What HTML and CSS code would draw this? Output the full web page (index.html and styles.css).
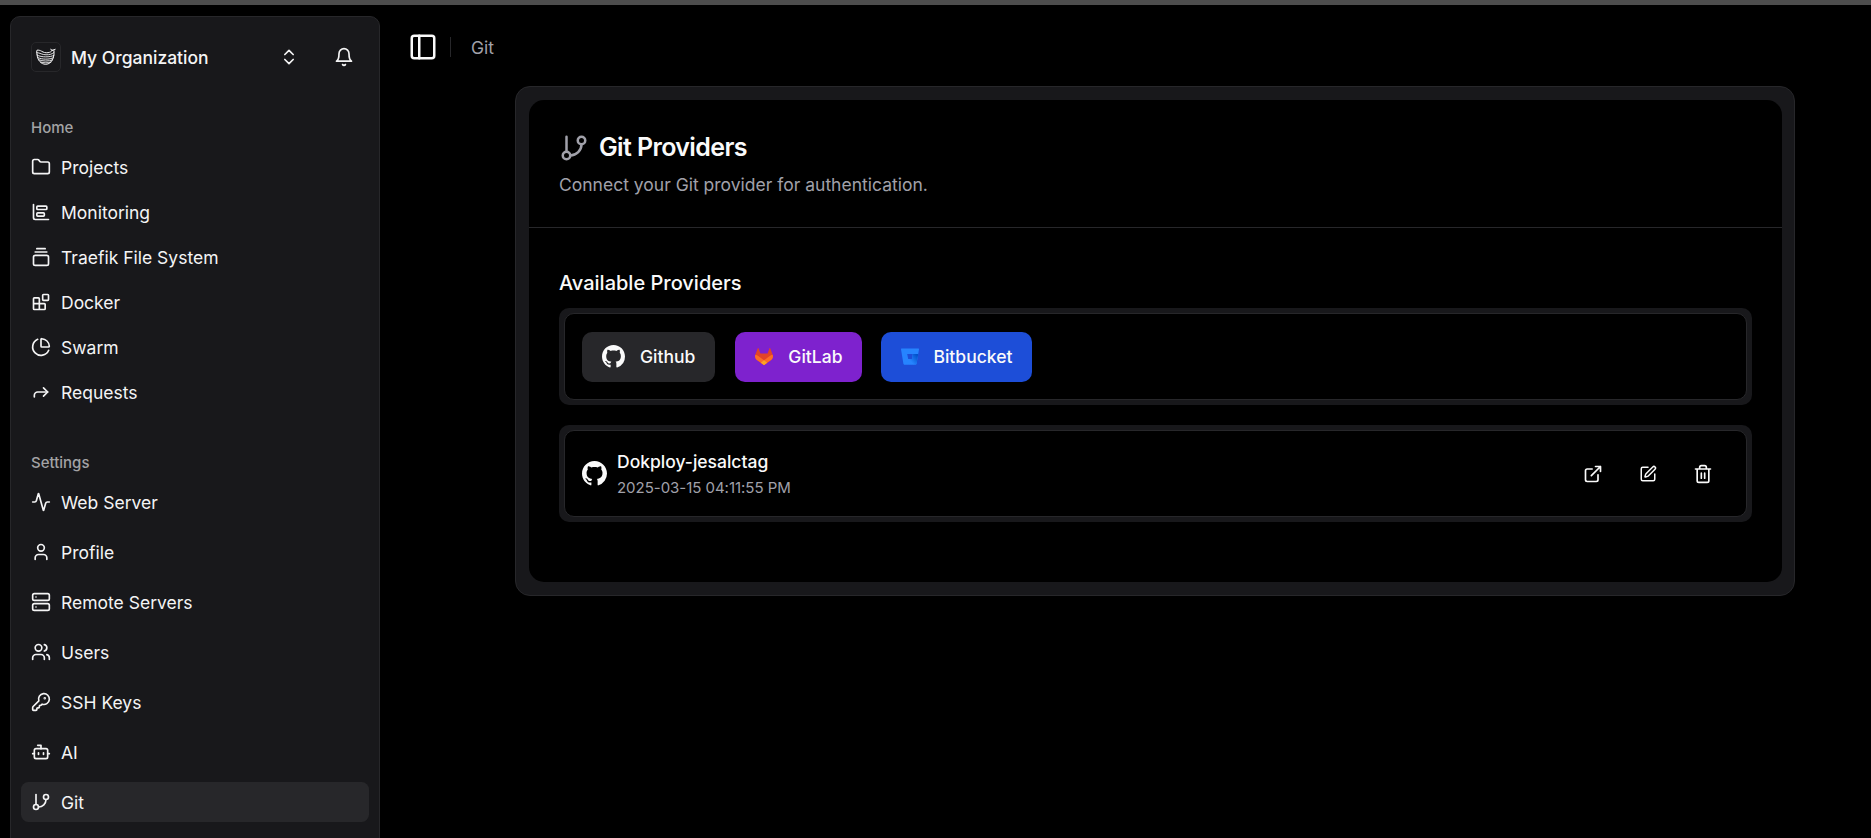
FILE: index.html
```html
<!DOCTYPE html>
<html lang="en">
<head>
<meta charset="utf-8">
<title>Git</title>
<link rel="stylesheet" href="styles.css">
</head>
<body>
<div class="topline"></div>
<div class="shell">
  <aside class="sidebar">
    <div class="org">
      <div class="org-logo">
        <svg viewBox="0 0 20 18" width="20" height="18" fill="none" stroke="currentColor" stroke-width="1" stroke-linecap="round">
          <path d="M1 6.200C.6 4.500.6 3.200 1 2.200c1.500-.3 3 .2 4.500 1C7.500 4.400 9.500 5 12 4.700c2-.3 3.600-1 4.300-2.500M16.300 2.300 14.700 1.300M16.300 2.300 19.200 1.300M17.900 2.300C18.900 8.500 16 16.300 9.800 16.300 4.800 16.300 1.300 12 1 6.200"/>
          <path d="M1 4.600c3 .2 5 2.200 9 2.200 3.500 0 6.300-.6 8-2.400M1.300 7.300c4.500 2 12.400 2.300 16.700 0M1.800 9.600c4 2 11.800 2.200 15.700 0M2.900 11.800c3.600 1.600 9.900 1.800 13.700 0M4.600 14c3 1.100 7.500 1.200 10.500 0" stroke-width=".9"/>
        </svg>
      </div>
      <span class="org-name">My Organization</span>
      <svg class="icon chevrons" viewBox="0 0 24 24"><path d="m7 15 5 5 5-5M7 9l5-5 5 5"/></svg>
      <svg class="icon bell" viewBox="0 0 24 24"><path d="M6 8a6 6 0 0 1 12 0c0 7 3 9 3 9H3s3-2 3-9M10.300 21a1.940 1.940 0 0 0 3.400 0"/></svg>
    </div>

    <nav class="group">
      <div class="group-label">Home</div>
      <a class="item"><svg class="icon" viewBox="0 0 24 24"><path d="M20 20a2 2 0 0 0 2-2V8a2 2 0 0 0-2-2h-7.900a2 2 0 0 1-1.690-.9L9.600 3.900A2 2 0 0 0 7.930 3H4a2 2 0 0 0-2 2v13a2 2 0 0 0 2 2Z"/></svg>Projects</a>
      <a class="item"><svg class="icon" viewBox="0 0 24 24"><path d="M3 3v16a2 2 0 0 0 2 2h16"/><rect x="7" y="5" width="12" height="4" rx="1"/><rect x="7" y="13" width="9" height="4" rx="1"/></svg>Monitoring</a>
      <a class="item"><svg class="icon" viewBox="0 0 24 24"><path d="M7 2h10M5 6h14"/><rect width="18" height="12" x="3" y="10" rx="2"/></svg>Traefik File System</a>
      <a class="item"><svg class="icon" viewBox="0 0 24 24"><rect width="7" height="7" x="14" y="3" rx="1"/><path d="M10 21V8a1 1 0 0 0-1-1H4a1 1 0 0 0-1 1v12a1 1 0 0 0 1 1h12a1 1 0 0 0 1-1v-5a1 1 0 0 0-1-1H3"/></svg>Docker</a>
      <a class="item"><svg class="icon" viewBox="0 0 24 24"><path d="M21 12c.552 0 1.005-.449.950-.998a10 10 0 0 0-8.953-8.951c-.550-.055-.998.398-.998.950v8a1 1 0 0 0 1 1z"/><path d="M21.210 15.890A10 10 0 1 1 8 2.830"/></svg>Swarm</a>
      <a class="item"><svg class="icon" viewBox="0 0 24 24"><path d="m15 17 5-5-5-5"/><path d="M4 18v-2a4 4 0 0 1 4-4h12"/></svg>Requests</a>
    </nav>

    <nav class="group settings">
      <div class="group-label">Settings</div>
      <a class="item"><svg class="icon" viewBox="0 0 24 24"><path d="M22 12h-2.480a2 2 0 0 0-1.930 1.460l-2.350 8.360a.25.25 0 0 1-.48 0L9.240 2.180a.25.25 0 0 0-.48 0l-2.350 8.360A2 2 0 0 1 4.490 12H2"/></svg>Web Server</a>
      <a class="item"><svg class="icon" viewBox="0 0 24 24"><path d="M19 21v-2a4 4 0 0 0-4-4H9a4 4 0 0 0-4 4v2"/><circle cx="12" cy="7" r="4"/></svg>Profile</a>
      <a class="item"><svg class="icon" viewBox="0 0 24 24"><rect width="20" height="8" x="2" y="2" rx="2"/><rect width="20" height="8" x="2" y="14" rx="2"/><path d="M6 6h.01M6 18h.01"/></svg>Remote Servers</a>
      <a class="item"><svg class="icon" viewBox="0 0 24 24"><path d="M16 21v-2a4 4 0 0 0-4-4H6a4 4 0 0 0-4 4v2"/><circle cx="9" cy="7" r="4"/><path d="M22 21v-2a4 4 0 0 0-3-3.870M16 3.130a4 4 0 0 1 0 7.750"/></svg>Users</a>
      <a class="item"><svg class="icon" viewBox="0 0 24 24"><path d="M2.586 17.414A2 2 0 0 0 2 18.828V21a1 1 0 0 0 1 1h3a1 1 0 0 0 1-1v-1a1 1 0 0 1 1-1h1a1 1 0 0 0 1-1v-1a1 1 0 0 1 1-1h.172a2 2 0 0 0 1.414-.586l.814-.814a6.500 6.500 0 1 0-4-4z"/><circle cx="16.500" cy="7.500" r=".5" fill="currentColor"/></svg>SSH Keys</a>
      <a class="item"><svg class="icon" viewBox="0 0 24 24"><path d="M12 8V4H8"/><rect width="16" height="12" x="4" y="8" rx="2"/><path d="M2 14h2M20 14h2M15 13v2M9 13v2"/></svg>AI</a>
      <a class="item active"><svg class="icon" viewBox="0 0 24 24"><path d="M6 3v12"/><circle cx="18" cy="6" r="3"/><circle cx="6" cy="18" r="3"/><path d="M18 9a9 9 0 0 1-9 9"/></svg>Git</a>
    </nav>
  </aside>

  <main class="main">
    <header class="crumbs">
      <svg class="icon panel" viewBox="0 0 24 24"><rect width="18" height="18" x="3" y="3" rx="2"/><path d="M9 3v18"/></svg>
      <span class="sep"></span>
      <span>Git</span>
    </header>

    <section class="frame">
      <div class="card">
        <div class="card-head">
          <h1 class="title"><svg class="icon title-icon" viewBox="0 0 24 24"><path d="M6 3v12"/><circle cx="18" cy="6" r="3"/><circle cx="6" cy="18" r="3"/><path d="M18 9a9 9 0 0 1-9 9"/></svg>Git Providers</h1>
          <p class="desc">Connect your Git provider for authentication.</p>
        </div>
        <div class="card-body">
          <h2 class="subtitle">Available Providers</h2>
          <div class="well">
            <div class="well-inner">
              <button class="btn github">
                <svg class="mark" viewBox="0 0 16 16" fill="currentColor"><path d="M8 0C3.580 0 0 3.580 0 8c0 3.540 2.290 6.530 5.470 7.590.4.070.55-.17.55-.38 0-.19-.01-.82-.01-1.490-2.010.37-2.530-.49-2.690-.94-.09-.23-.48-.94-.82-1.130-.28-.15-.68-.52-.01-.53.63-.01 1.080.58 1.230.82.72 1.210 1.870.87 2.330.66.070-.52.28-.87.51-1.070-1.780-.2-3.640-.89-3.640-3.950 0-.87.31-1.590.82-2.150-.08-.2-.36-1.020.08-2.120 0 0 .67-.21 2.200.82.64-.18 1.320-.27 2-.27s1.360.09 2 .27c1.530-1.040 2.200-.82 2.200-.82.44 1.100.16 1.920.08 2.120.51.56.82 1.270.82 2.150 0 3.070-1.870 3.750-3.650 3.950.29.25.54.73.54 1.480 0 1.070-.01 1.930-.01 2.200 0 .21.15.46.55.38A8.010 8.010 0 0 0 16 8c0-4.420-3.580-8-8-8z"/></svg>
                <span>Github</span>
              </button>
              <button class="btn gitlab">
                <svg class="mark" viewBox="0 0 18 17"><path fill="#e24329" d="M17.700 6.700 15.300.4c-.15-.4-.7-.4-.85 0L12.600 5.500H5.400L3.550.4C3.400 0 2.850 0 2.700.4L.3 6.700c-.7 2-.1 4 1.600 5.300L9 17l7.100-5c1.700-1.300 2.300-3.300 1.600-5.300z"/><path fill="#fc6d26" d="M17.700 6.700c-1.200.25-2.300.75-3.300 1.500L9 12.200 3.600 8.200C2.600 7.450 1.500 6.950.3 6.700c-.7 2-.1 4 1.600 5.300L9 17l7.100-5c1.700-1.300 2.300-3.300 1.600-5.300z"/><path fill="#fca326" d="m5.800 14.700 2.600 2c.4.300.8.300 1.200 0l2.600-2L9 12.200z"/></svg>
                <span>GitLab</span>
              </button>
              <button class="btn bitbucket">
                <svg class="mark" viewBox="0 0 18 16"><defs><linearGradient id="bb" x1="17" y1="5" x2="9" y2="12" gradientUnits="userSpaceOnUse"><stop offset=".18" stop-color="#0052cc"/><stop offset="1" stop-color="#2684ff"/></linearGradient></defs><path fill="#2684ff" d="M.6 0a.6.6 0 0 0-.6.7l2.400 14.600c.1.400.4.700.8.700h11.700c.3 0 .5-.2.600-.5L18 .7a.6.6 0 0 0-.6-.7zM10.900 10.600H7.200l-1-5.200h5.600z"/><path fill="url(#bb)" d="M17.200 5.400h-5.400l-.9 5.200H7.200L2.800 15.800c.1.100.3.200.5.200h11.600c.3 0 .5-.2.600-.5z"/></svg>
                <span>Bitbucket</span>
              </button>
            </div>
          </div>

          <div class="well">
            <div class="well-inner row">
              <svg class="avatar" viewBox="0 0 16 16" fill="currentColor"><path d="M8 0C3.580 0 0 3.580 0 8c0 3.540 2.290 6.530 5.470 7.590.4.070.55-.17.55-.38 0-.19-.01-.82-.01-1.490-2.010.37-2.530-.49-2.690-.94-.09-.23-.48-.94-.82-1.130-.28-.15-.68-.52-.01-.53.63-.01 1.080.58 1.230.82.72 1.210 1.870.87 2.330.66.070-.52.28-.87.51-1.070-1.780-.2-3.640-.89-3.640-3.950 0-.87.31-1.590.82-2.150-.08-.2-.36-1.020.08-2.120 0 0 .67-.21 2.200.82.64-.18 1.320-.27 2-.27s1.360.09 2 .27c1.530-1.040 2.200-.82 2.200-.82.44 1.100.16 1.920.08 2.120.51.56.82 1.270.82 2.150 0 3.070-1.870 3.750-3.650 3.950.29.25.54.73.54 1.480 0 1.070-.01 1.930-.01 2.200 0 .21.15.46.55.38A8.010 8.010 0 0 0 16 8c0-4.420-3.580-8-8-8z"/></svg>
              <div class="meta">
                <span class="name">Dokploy-jesalctag</span>
                <span class="date">2025-03-15 04:11:55 PM</span>
              </div>
              <div class="actions">
                <svg class="icon" viewBox="0 0 24 24"><path d="M15 3h6v6M10 14 21 3M18 13v6a2 2 0 0 1-2 2H5a2 2 0 0 1-2-2V8a2 2 0 0 1 2-2h6"/></svg>
                <svg class="icon edit" viewBox="0 0 24 24"><path d="M12 3H5a2 2 0 0 0-2 2v14a2 2 0 0 0 2 2h14a2 2 0 0 0 2-2v-7"/><path d="M18.375 2.625a1 1 0 0 1 3 3l-9.013 9.014a2 2 0 0 1-.853.505l-2.873.84a.5.5 0 0 1-.62-.62l.84-2.873a2 2 0 0 1 .506-.852z"/></svg>
                <svg class="icon" viewBox="0 0 24 24"><path d="M3 6h18M19 6v14c0 1-1 2-2 2H7c-1 0-2-1-2-2V6M8 6V4c0-1 1-2 2-2h4c1 0 2 1 2 2v2M10 11v6M14 11v6"/></svg>
              </div>
            </div>
          </div>
        </div>
      </div>
    </section>
  </main>
</div>
</body>
</html>
```
FILE: styles.css
```css
* { box-sizing: border-box; }

html, body {
  margin: 0;
  height: 100%;
  overflow: hidden;
}

body {
  background: #000;
  color: #fafafa;
  font: 400 17.5px/25px Inter, "Liberation Sans", sans-serif;
}

h1, h2, p { margin: 0; }

.topline {
  height: 5px;
  background: #4d4d4d;
}

.shell {
  display: flex;
  height: calc(100vh - 5px);
  overflow: hidden;
}

.icon {
  width: 20px;
  height: 20px;
  flex: none;
  fill: none;
  stroke: currentColor;
  stroke-width: 2;
  stroke-linecap: round;
  stroke-linejoin: round;
}

/* Sidebar */
.sidebar {
  width: 370px;
  height: 860px;
  flex: none;
  margin: 11px 0 0 10px;
  padding: 10px;
  background: #18181b;
  border: 1px solid #27272a;
  border-radius: 10px;
  color: #f4f4f5;
}

.org {
  display: flex;
  align-items: center;
  height: 60px;
  padding: 0 15px 0 10px;
}

.org-logo {
  display: grid;
  place-items: center;
  width: 30px;
  height: 30px;
  border: 1px solid #27272a;
  border-radius: 5px;
}

.org-name {
  flex: 1;
  margin-left: 10px;
  font-weight: 500;
}

.bell { margin-left: 35px; }

.group {
  display: flex;
  flex-direction: column;
  gap: 5px;
  padding-top: 20px;
}

.group-label {
  height: 40px;
  margin-bottom: -5px;
  padding: 0 10px;
  font-size: 15px;
  font-weight: 500;
  line-height: 41px;
  color: #a3a3a5;
}

.item {
  display: flex;
  align-items: center;
  gap: 10px;
  height: 40px;
  padding: 0 10px;
  border-radius: 7.5px;
}

.settings {
  gap: 10px;
  padding-top: 30px;
}

.settings .group-label { margin-bottom: -10px; }

.active { background: #27272a; }

/* Main area */
.main {
  flex: 1;
  padding: 0 20px 0 28px;
}

.crumbs {
  display: flex;
  align-items: center;
  height: 81px;
  padding-top: 3px;
  color: #a1a1aa;
}

.panel {
  width: 30px;
  height: 30px;
  color: #fafafa;
}

.sep {
  width: 1px;
  height: 20px;
  margin: -1px 20px 0 12px;
  background: #27272a;
}

.frame {
  width: 1280px;
  height: 510px;
  margin-left: 107px;
  padding: 13px 12px 13px 13px;
  background: #18181b;
  border: 1px solid #27272a;
  border-radius: 15px;
}

.card {
  height: 482px;
  background: #000;
  border-radius: 15px;
}

.card-head {
  height: 128px;
  padding: 30px;
  border-bottom: 1px solid #27272a;
}

.title {
  display: flex;
  align-items: center;
  gap: 10px;
  height: 35px;
  font-size: 25px;
  font-weight: 600;
  letter-spacing: -0.625px;
}

.title-icon {
  width: 30px;
  height: 30px;
  color: #a1a1aa;
}

.desc {
  margin-top: 7px;
  color: #a1a1aa;
}

.card-body {
  display: flex;
  flex-direction: column;
  padding: 40px 30px 0;
}

.subtitle {
  height: 30px;
  margin-bottom: 10px;
  font-size: 20px;
  font-weight: 500;
  line-height: 30px;
}

.well {
  height: 97px;
  margin-bottom: 20px;
  padding: 5px;
  background: #18181b;
  border-radius: 10px;
}

.well-inner {
  display: flex;
  align-items: center;
  gap: 20px;
  height: 87px;
  padding: 0 17px;
  background: #000;
  border: 1px solid #27272a;
  border-radius: 10px;
}

.btn {
  display: flex;
  align-items: center;
  height: 50px;
  padding: 0 20px;
  border: 0;
  border-radius: 10px;
  color: #fafafa;
  font: 500 17.5px/25px Inter, "Liberation Sans", sans-serif;
}

.github { background: #27272a; }
.gitlab { background: #7e22ce; }
.bitbucket {
  margin-left: -1px;
  background: #1d4ed8;
}

.mark {
  flex: none;
  width: 18px;
  height: 17px;
}

.github .mark { width: 23px; height: 23px; }
.btn span { margin-left: 15px; }
.btn.bitbucket span { margin-left: 14px; }

.row { gap: 10px; }

.avatar { width: 25px; height: 25px; }

.meta {
  display: flex;
  flex: 1;
  flex-direction: column;
}

.name { font-weight: 500; line-height: 27px; }
.date { font-size: 15px; letter-spacing: -0.03px; color: #a1a1aa; }

.actions {
  display: flex;
  align-items: center;
  gap: 35px;
  padding-right: 16px;
}

.edit {
  width: 18px;
  height: 18px;
  margin: 0 1px;
}
```
